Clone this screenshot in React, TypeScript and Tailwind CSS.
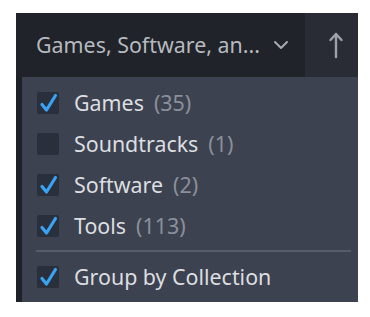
const items = [
  { label: "Games", count: 35, on: true },
  { label: "Soundtracks", count: 1, on: false },
  { label: "Software", count: 2, on: true },
  { label: "Tools", count: 113, on: true },
];

function Check({ on }: { on: boolean }) {
  return (
    <span className="flex h-[22px] w-[22px] shrink-0 items-center justify-center rounded-[2px] bg-[#2a2f3c]">
      {on && (
        <svg width="22" height="22" viewBox="0 0 22 22" fill="none">
          <path
            d="M5 12.5 L9.5 18 L18.5 3.5"
            stroke="#3aa2f2"
            strokeWidth="3.2"
            strokeLinecap="round"
            strokeLinejoin="round"
          />
        </svg>
      )}
    </span>
  );
}

function Row({ label, count, on }: { label: string; count?: number; on: boolean }) {
  return (
    <div className="flex h-[41px] items-center gap-[15px] pl-[15px]">
      <Check on={on} />
      <span className="text-[#dcdee0]">
        {label}
        {count !== undefined && <span className="ml-[10px] text-[#8a909a]">({count})</span>}
      </span>
    </div>
  );
}

export default function App() {
  return (
    <div
      className="min-h-screen bg-white pl-4 pt-[13px]"
      style={{ fontFamily: '"Noto Sans", "Open Sans", sans-serif' }}
    >
      <div className="flex w-[342px] flex-col bg-[#1e2128] text-[21.4px] leading-none">
        <div className="flex h-[64px]">
          <div className="flex w-[289px] items-center bg-[#202329] pl-5">
            <span className="whitespace-nowrap text-[#b6babf]">Games, Software, an...</span>
            <svg className="ml-[13px] shrink-0" width="16" height="10" viewBox="0 0 16 10" fill="none">
              <path d="M2 2 L8 8 L14 2" stroke="#a7abb1" strokeWidth="2" strokeLinecap="round" strokeLinejoin="round" />
            </svg>
          </div>
          <div className="flex flex-1 items-center justify-center bg-[#292c34] pl-[8px]">
            <svg width="16" height="28" viewBox="0 0 16 28" fill="none">
              <path d="M8 26 L8 3 M2.5 9 L8 3 L13.5 9" stroke="#9da2a9" strokeWidth="2.4" strokeLinecap="round" strokeLinejoin="round" />
            </svg>
          </div>
        </div>
        <div className="ml-[6px] flex flex-col bg-[#3d4250] pb-[5px] pt-[5px]">
          {items.map((it) => (
            <Row key={it.label} {...it} />
          ))}
          <div className="my-[4px] ml-[14px] mr-[7px] h-[2px] bg-[#565c69]" />
          <Row label="Group by Collection" on />
        </div>
      </div>
    </div>
  );
}
